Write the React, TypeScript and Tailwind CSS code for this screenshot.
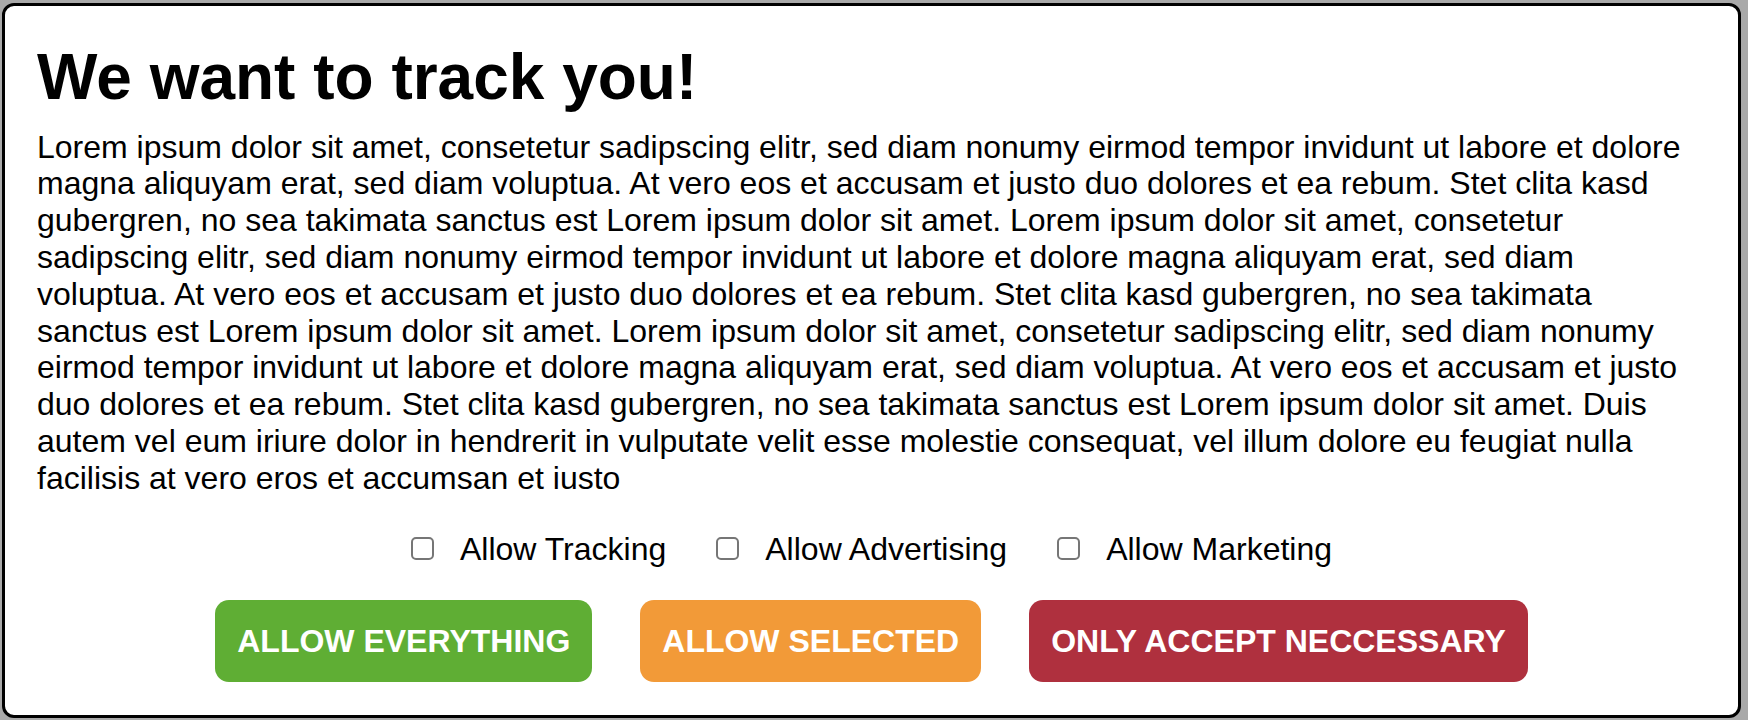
import { useState } from "react";

const LOREM =
  "Lorem ipsum dolor sit amet, consetetur sadipscing elitr, sed diam nonumy eirmod tempor invidunt ut labore et dolore magna aliquyam erat, sed diam voluptua. At vero eos et accusam et justo duo dolores et ea rebum. Stet clita kasd gubergren, no sea takimata sanctus est Lorem ipsum dolor sit amet. Lorem ipsum dolor sit amet, consetetur sadipscing elitr, sed diam nonumy eirmod tempor invidunt ut labore et dolore magna aliquyam erat, sed diam voluptua. At vero eos et accusam et justo duo dolores et ea rebum. Stet clita kasd gubergren, no sea takimata sanctus est Lorem ipsum dolor sit amet. Lorem ipsum dolor sit amet, consetetur sadipscing elitr, sed diam nonumy eirmod tempor invidunt ut labore et dolore magna aliquyam erat, sed diam voluptua. At vero eos et accusam et justo duo dolores et ea rebum. Stet clita kasd gubergren, no sea takimata sanctus est Lorem ipsum dolor sit amet. Duis autem vel eum iriure dolor in hendrerit in vulputate velit esse molestie consequat, vel illum dolore eu feugiat nulla facilisis at vero eros et accumsan et iusto";

const options = ["Allow Tracking", "Allow Advertising", "Allow Marketing"];

function Checkbox({ label }: { label: string }) {
  const [checked, setChecked] = useState(false);
  return (
    <label className="flex cursor-pointer items-center gap-[26px]">
      <span
        onClick={() => setChecked(c => !c)}
        className="flex h-[23px] w-[23px] items-center justify-center rounded-[5px] border-2 border-[#767676] bg-white"
      >
        {checked && (
          <svg viewBox="0 0 16 16" className="h-4 w-4">
            <path d="M3 8.5l3 3 7-7" fill="none" stroke="#333" strokeWidth="2.2" />
          </svg>
        )}
      </span>
      <span>{label}</span>
    </label>
  );
}

export default function App() {
  return (
    <div className="min-h-[720px] bg-[#a9a9a9] pt-[3px] pl-[2px] font-['Liberation_Sans',Arial,sans-serif] text-black">
      <div className="w-[1739px] rounded-[12px] border-[3px] border-black bg-white px-8 pt-[35px] pb-[33px]">
        <h1 className="mb-[14px] text-[64px] leading-[1.15] font-bold">We want to track you!</h1>
        <p className="pr-[10px] text-[32px] leading-[36.8px]">{LOREM}</p>

        <div className="mt-[34px] flex items-center justify-center gap-[50px] text-[32px] leading-[36.8px]">
          {options.map(o => (
            <Checkbox key={o} label={o} />
          ))}
        </div>

        <div className="mt-[33px] flex justify-center gap-[48px] text-[32px] leading-[36.8px] font-bold text-white">
          <button type="button" className="rounded-[14px] bg-[#5fae34] px-[22px] py-[22.5px]">
            ALLOW EVERYTHING
          </button>
          <button type="button" className="rounded-[14px] bg-[#f29a38] px-[22px] py-[22.5px]">
            ALLOW SELECTED
          </button>
          <button type="button" className="rounded-[14px] bg-[#af303e] px-[22px] py-[22.5px]">
            ONLY ACCEPT NECCESSARY
          </button>
        </div>
      </div>
    </div>
  );
}
